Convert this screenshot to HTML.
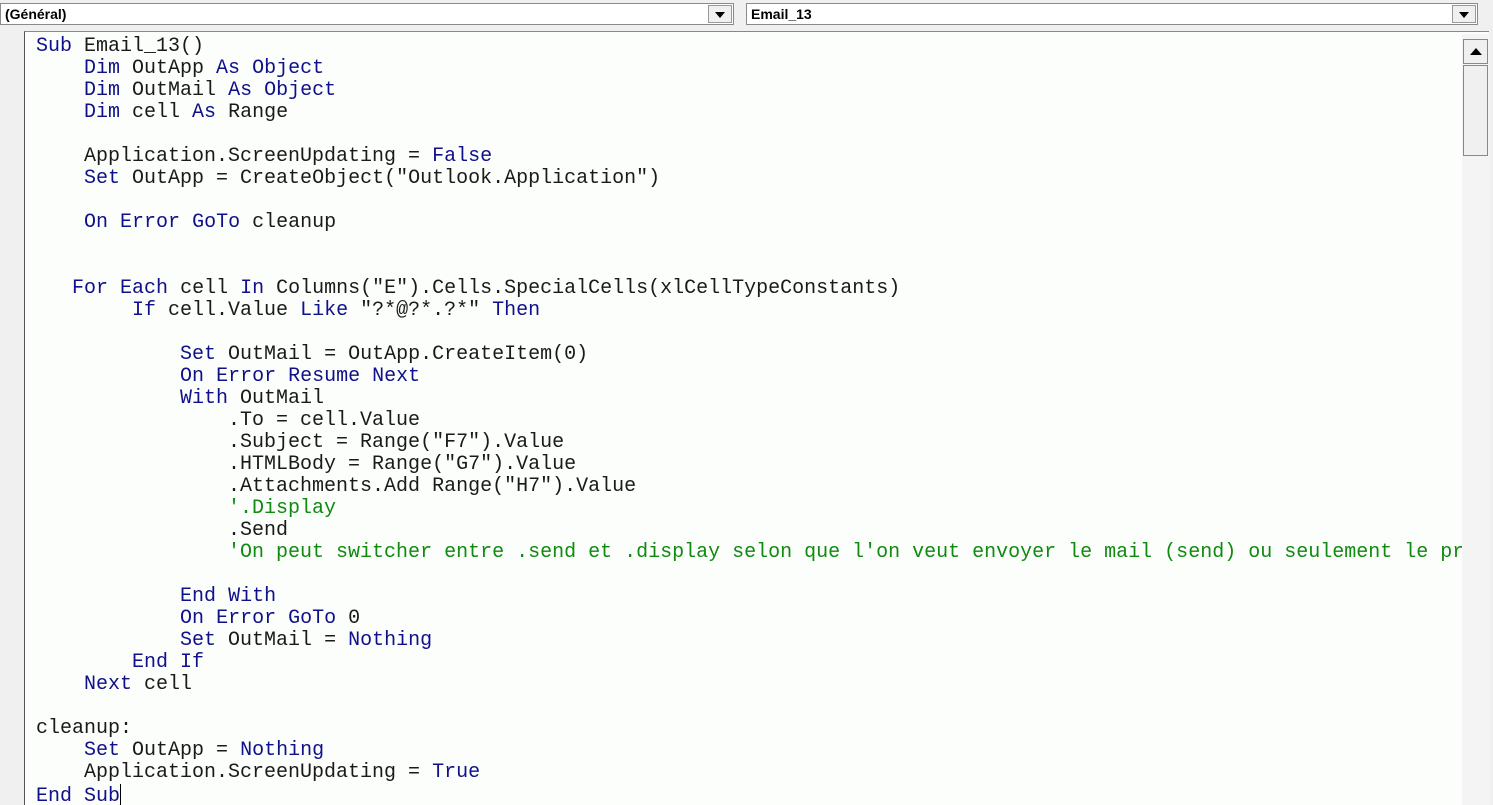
<!DOCTYPE html><html><head><style>
body{margin:0;width:1493px;height:805px;background:#f0f0f0;overflow:hidden;position:relative;font-family:"Liberation Sans",sans-serif}
.combo{position:absolute;top:3px;height:22px;background:#fff;border:1px solid #8a8a8a;box-sizing:border-box;font-weight:bold;font-size:14px;line-height:20px;padding-left:4px}
.btn{position:absolute;right:1px;top:1px;width:24px;height:18px;background:#f0f0f0;border:1px solid #999;box-sizing:border-box}
.btn:after{content:"";position:absolute;left:6px;top:6px;border-left:5px solid transparent;border-right:5px solid transparent;border-top:6px solid #000}
.code{position:absolute;left:24px;top:31px;width:1465px;height:774px;background:#fbfefb;border-left:1px solid #555;border-top:1px solid #888;box-sizing:border-box;overflow:hidden}
pre{margin:0;position:absolute;left:11px;top:4px;font-family:"Liberation Mono",monospace;font-size:20px;line-height:22px;color:#1a1a1a}
.k{color:#10108a}.c{color:#108a10}
.cur{display:inline-block;width:1px;height:21px;background:#000;vertical-align:-4px}
.sb{position:absolute;left:1462px;top:34px;width:28px;height:771px;background:#f4f4f4}
.up{position:absolute;left:1px;top:5px;width:25px;height:25px;background:#f0f0f0;border:1px solid #888;box-sizing:border-box}
.up:after{content:"";position:absolute;left:6px;top:8px;border-left:6px solid transparent;border-right:6px solid transparent;border-bottom:7px solid #000}
.th{position:absolute;left:1px;top:31px;width:25px;height:91px;background:#f0f0f0;border:1px solid #888;box-sizing:border-box}
</style></head><body>
<div class="combo" style="left:0;width:734px">(Général)<div class="btn"></div></div>
<div class="combo" style="left:746px;width:732px">Email_13<div class="btn"></div></div>
<div class="code"><pre><span class="k">Sub</span> Email_13()
    <span class="k">Dim</span> OutApp <span class="k">As</span> <span class="k">Object</span>
    <span class="k">Dim</span> OutMail <span class="k">As</span> <span class="k">Object</span>
    <span class="k">Dim</span> cell <span class="k">As</span> Range

    Application.ScreenUpdating = <span class="k">False</span>
    <span class="k">Set</span> OutApp = CreateObject("Outlook.Application")

    <span class="k">On</span> <span class="k">Error</span> <span class="k">GoTo</span> cleanup


   <span class="k">For</span> <span class="k">Each</span> cell <span class="k">In</span> Columns("E").Cells.SpecialCells(xlCellTypeConstants)
        <span class="k">If</span> cell.Value <span class="k">Like</span> "?*@?*.?*" <span class="k">Then</span>

            <span class="k">Set</span> OutMail = OutApp.CreateItem(0)
            <span class="k">On</span> <span class="k">Error</span> <span class="k">Resume</span> <span class="k">Next</span>
            <span class="k">With</span> OutMail
                .To = cell.Value
                .Subject = Range("F7").Value
                .HTMLBody = Range("G7").Value
                .Attachments.Add Range("H7").Value
                <span class="c">'.Display</span>
                .Send
                <span class="c">'On peut switcher entre .send et .display selon que l'on veut envoyer le mail (send) ou seulement le preparer (display)</span>

            <span class="k">End</span> <span class="k">With</span>
            <span class="k">On</span> <span class="k">Error</span> <span class="k">GoTo</span> 0
            <span class="k">Set</span> OutMail = <span class="k">Nothing</span>
        <span class="k">End</span> <span class="k">If</span>
    <span class="k">Next</span> cell

cleanup:
    <span class="k">Set</span> OutApp = <span class="k">Nothing</span>
    Application.ScreenUpdating = <span class="k">True</span>
<span class="k">End</span> <span class="k">Sub</span><span class="cur"></span></pre></div>
<div class="sb"><div class="up"></div><div class="th"></div></div>
</body></html>
